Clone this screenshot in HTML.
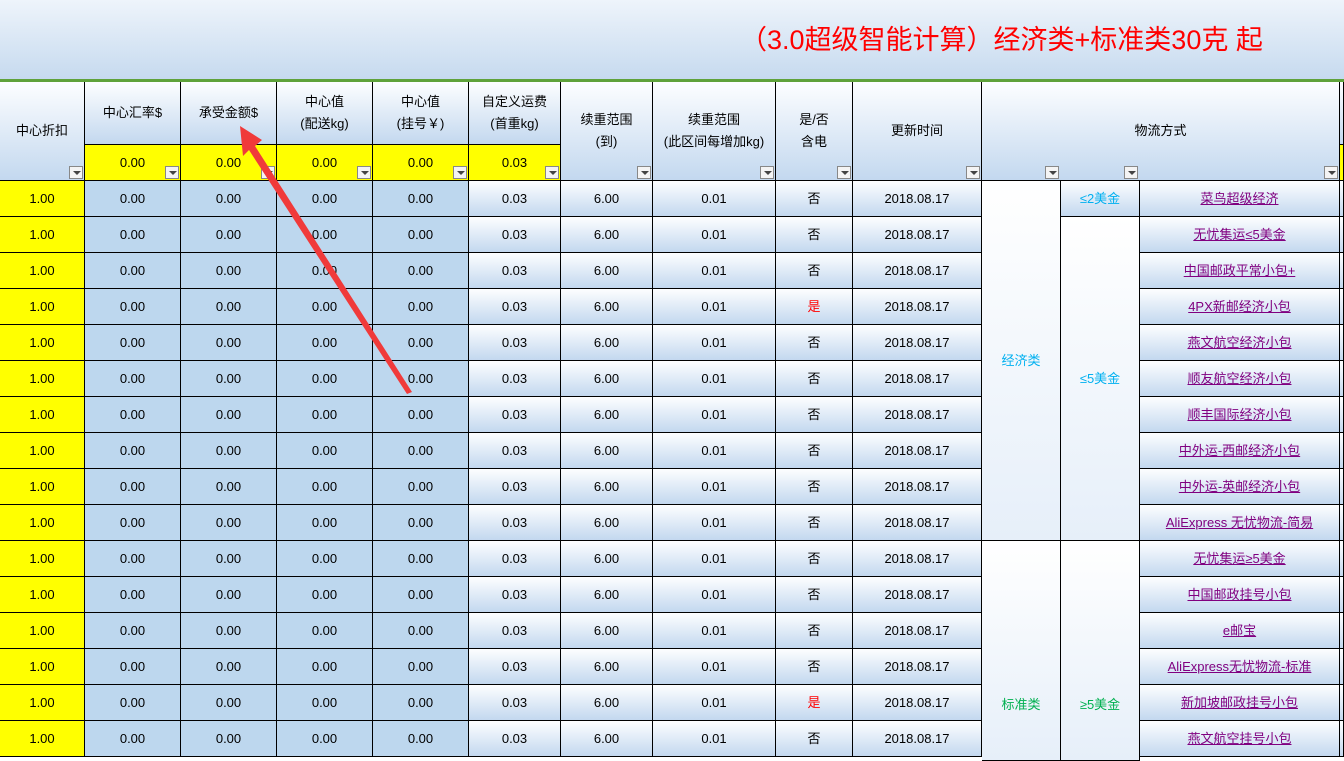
<!DOCTYPE html>
<html><head><meta charset="utf-8">
<style>
body{margin:0;width:1344px;height:759px;overflow:hidden;background:#fff;font-family:"Liberation Sans","Noto Sans CJK SC",sans-serif;position:relative}
.top{position:absolute;left:0;top:0;width:1344px;height:79px;background:linear-gradient(#eef4fb,#c6daef)}
.title{position:absolute;left:740px;top:18px;font-size:27px;color:#ff0000;white-space:nowrap;font-family:"Liberation Sans","Noto Sans CJK SC",sans-serif}
.green{position:absolute;left:0;top:79px;width:1344px;height:3px;background:#5fa23a}
.c{position:absolute;box-sizing:border-box;border-right:1px solid #000;border-bottom:1px solid #000;display:flex;align-items:center;justify-content:center;text-align:center;font-size:13px;color:#000;line-height:22px}
.g{background:linear-gradient(#fdfeff,#c3d8ef)}
.b{background:#bdd7ee}
.y{background:#ffff00}
.m{background:linear-gradient(#ffffff,#e6eff9)}
.dd{position:absolute;width:14px;height:13px;border:1px solid #888;background:#f4f4f4;box-sizing:border-box}
.dd:after{content:"";position:absolute;left:3px;top:4px;border-left:4px solid transparent;border-right:4px solid transparent;border-top:4px solid #444}
a{color:#800080;text-decoration:underline}
</style></head><body>
<div class="top"></div>
<div class="title">（3.0超级智能计算）经济类+标准类30克 起</div>
<div class="green"></div>
<div id="g"></div>
<svg style="position:absolute;left:0;top:0" width="1344" height="759">
<polygon points="240,126 262,140 255,146 412,392 407,394 249,150 243,156" fill="#f03a3a"/>
</svg>
<script>
var x=[0,85,181,277,373,469,561,653,776,853,982,1061,1140,1340,1344];
var h='';
function cell(x1,y1,w,hh,cls,txt){h+='<div class="c '+cls+'" style="left:'+x1+'px;top:'+y1+'px;width:'+w+'px;height:'+hh+'px">'+txt+'</div>';}
function dd(xr,yb){h+='<div class="dd" style="left:'+(xr-16)+'px;top:'+(yb-15)+'px"></div>';}
var hd=['中心折扣','中心汇率$','承受金额$','中心值<br>(配送kg)','中心值<br>(挂号￥)','自定义运费<br>(首重kg)','续重范围<br>(到)','续重范围<br>(此区间每增加kg)','是/否<br>含电','更新时间'];
var yv=['0.00','0.00','0.00','0.00','0.03'];
cell(0,82,85,99,'g',hd[0]);
for(var i=1;i<=5;i++){cell(x[i],82,x[i+1]-x[i],63,'g',hd[i]);cell(x[i],145,x[i+1]-x[i],36,'y',yv[i-1]);}
for(var i=6;i<=9;i++)cell(x[i],82,x[i+1]-x[i],99,'g',hd[i]);
cell(982,82,358,99,'g','物流方式');
cell(1340,82,4,63,'g','');cell(1340,145,4,36,'y','');
for(var i=0;i<10;i++)dd(x[i+1],181);
dd(1061,181);dd(1140,181);dd(1340,181);
var links=['菜鸟超级经济','无忧集运≤5美金','中国邮政平常小包+','4PX新邮经济小包','燕文航空经济小包','顺友航空经济小包','顺丰国际经济小包','中外运-西邮经济小包','中外运-英邮经济小包','AliExpress 无忧物流-简易','无忧集运≥5美金','中国邮政挂号小包 ','e邮宝','AliExpress无忧物流-标准','新加坡邮政挂号小包','燕文航空挂号小包'];
for(var r=0;r<16;r++){
 var y=181+r*36;
 var v=['1.00','0.00','0.00','0.00','0.00','0.03','6.00','0.01',(r==3||r==14)?'<span style="color:#f00">是</span>':'否','2018.08.17'];
 for(var i=0;i<10;i++){var cls=i==0?'y':(i<=4?'b':'g');cell(x[i],y,x[i+1]-x[i],36,cls,v[i]);}
 cell(1140,y,200,36,'g','<a>'+links[r]+'</a>');
 cell(1340,y,4,36,'g','');
}
cell(982,181,79,360,'m','<span style="color:#00b0f0">经济类</span>');
cell(982,541,79,220,'m','<span style="color:#00b050;position:relative;top:54px">标准类</span>');
cell(1061,181,79,36,'g','<span style="color:#00b0f0">≤2美金</span>');
cell(1061,217,79,324,'m','<span style="color:#00b0f0">≤5美金</span>');
cell(1061,541,79,220,'m','<span style="color:#00b050;position:relative;top:54px">≥5美金</span>');
document.getElementById('g').innerHTML=h;
</script>
</body></html>
